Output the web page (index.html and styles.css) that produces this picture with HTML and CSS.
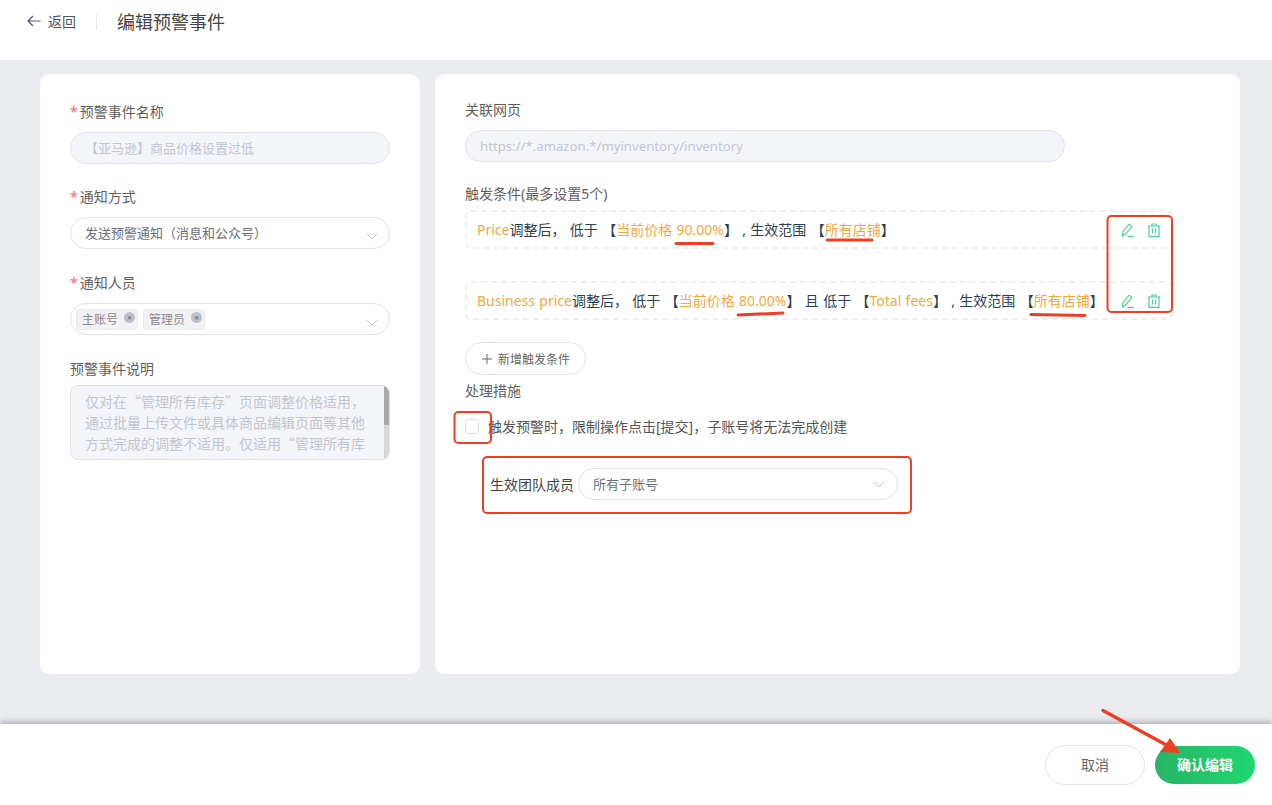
FILE: index.html
```html
<!DOCTYPE html>
<html lang="zh-CN">
<head>
    <meta charset="UTF-8">
    <title>编辑预警事件</title>
    <link rel="stylesheet" href="styles.css">
</head>
<body>
    <!-- top bar -->
    <header class="topbar">
        <a class="back">
            <svg width="14" height="12" viewBox="0 0 14 12" fill="none" stroke="#4a5a68" stroke-width="1.2"><path d="M13.5 6H1M6 1 1 6l5 5"/></svg>
            返回
        </a>
        <span class="divider"></span>
        <h1 class="page-title">编辑预警事件</h1>
    </header>

    <main class="content">
        <!-- left card -->
        <section class="card card-left">
            <div class="field">
                <label class="label"><i>*</i>预警事件名称</label>
                <div class="input disabled">【亚马逊】商品价格设置过低</div>
            </div>
            <div class="field">
                <label class="label"><i>*</i>通知方式</label>
                <div class="input select">发送预警通知（消息和公众号）
                    <svg class="chevron" width="12" height="7" viewBox="0 0 12 7" fill="none" stroke="#c5c8d2" stroke-width="1"><path d="M1 1l5 5 5-5"/></svg>
                </div>
            </div>
            <div class="field">
                <label class="label"><i>*</i>通知人员</label>
                <div class="input select tags">
                    <span class="tag">主账号<b class="tag-x">×</b></span>
                    <span class="tag">管理员<b class="tag-x">×</b></span>
                    <svg class="chevron" width="12" height="7" viewBox="0 0 12 7" fill="none" stroke="#c5c8d2" stroke-width="1"><path d="M1 1l5 5 5-5"/></svg>
                </div>
            </div>
            <div class="field last">
                <label class="label">预警事件说明</label>
                <div class="textarea">
                    仅对在“管理所有库存”页面调整价格适用，<br>
                    通过批量上传文件或具体商品编辑页面等其他<br>
                    方式完成的调整不适用。仅适用“管理所有库
                    <span class="scroll-track"><span class="scroll-thumb"></span></span>
                </div>
            </div>
        </section>

        <!-- right card -->
        <section class="card card-right">
            <label class="label">关联网页</label>
            <div class="input disabled url">https://*.amazon.*/myinventory/inventory</div>

            <label class="label cond-label">触发条件(最多设置5个)</label>
            <div class="cond">
                <p><em>Price</em>调整后， 低于 【<em>当前价格 90.00%</em>】 , 生效范围 【<em>所有店铺</em>】</p>
                <div class="cond-actions">
                    <svg width="14" height="14" viewBox="0 0 14 14" fill="none" stroke="#4bd07f" stroke-width="1.1"><path d="M1.500 13 2 8.500 8 1.200l3 2.200L5 10.500 1.500 13z"/><path d="M6.500 13.500h6.500" stroke-width="1.200"/></svg>
                    <svg width="14" height="14" viewBox="0 0 14 14" fill="none" stroke="#4bd49a" stroke-width="1.2"><path d="M.5 3h13M5 3V1h4v2M2 3v10.300h10V3M5.500 5.500v5M8.500 5.500v5"/></svg>
                </div>
            </div>
            <div class="cond second">
                <p><em>Business price</em>调整后， 低于 【<em>当前价格 80.00%</em>】 且 低于 【<em>Total fees</em>】 , 生效范围 【<em>所有店铺</em>】</p>
                <div class="cond-actions">
                    <svg width="14" height="14" viewBox="0 0 14 14" fill="none" stroke="#4bd07f" stroke-width="1.1"><path d="M1.500 13 2 8.500 8 1.200l3 2.200L5 10.500 1.500 13z"/><path d="M6.500 13.500h6.500" stroke-width="1.200"/></svg>
                    <svg width="14" height="14" viewBox="0 0 14 14" fill="none" stroke="#4bd49a" stroke-width="1.2"><path d="M.5 3h13M5 3V1h4v2M2 3v10.300h10V3M5.500 5.500v5M8.500 5.500v5"/></svg>
                </div>
            </div>

            <button type="button" class="add-btn">
                <svg width="10" height="10" viewBox="0 0 10 10" stroke="#666" stroke-width="1"><path d="M5 0v10M0 5h10"/></svg>
                新增触发条件
            </button>

            <label class="label action-label">处理措施</label>
            <div class="check-row">
                <span class="checkbox"></span>
                <span>触发预警时，限制操作点击[提交]，子账号将无法完成创建</span>
            </div>
            <div class="team-row">
                <span>生效团队成员</span>
                <div class="input select team">所有子账号
                    <svg class="chevron" width="12" height="7" viewBox="0 0 12 7" fill="none" stroke="#c5c8d2" stroke-width="1"><path d="M1 1l5 5 5-5"/></svg>
                </div>
            </div>
        </section>
    </main>

    <!-- bottom bar -->
    <footer class="bottombar">
        <button type="button" class="btn">取消</button>
        <button type="button" class="btn primary">确认编辑</button>
    </footer>

    <!-- red marks drawn over the screenshot -->
    <svg class="marks" width="1272" height="805" viewBox="0 0 1272 805" fill="none" stroke="#ee3f24" stroke-width="2">
        <rect x="1107.500" y="216" width="64.500" height="96" rx="4"/>
        <rect x="454.500" y="412" width="36.500" height="31" rx="4"/>
        <rect x="483" y="457" width="428" height="56" rx="4"/>
        <g stroke-width="3" stroke-linecap="round">
            <path d="M676 243.500h37"/>
            <path d="M827 240h45"/>
            <path d="M738 315l45-2"/>
            <path d="M1031 314.500l54 1"/>
        </g>
        <path d="M1103 710.500 1170 747" stroke-width="3.500" stroke-linecap="round"/>
        <path d="M1170 738l10 15-20-1z" fill="#ee3f24" stroke="none"/>
    </svg>
</body>
</html>
```

FILE: styles.css
```css
*{
    margin: 0;
    padding: 0;
    box-sizing: border-box;
}
body{
    font-family: "Noto Sans", "Noto Sans CJK SC", sans-serif;
    font-size: 14px;
    color: #666;
    height: 805px;
    overflow: hidden;
    position: relative;
    display: flex;
    flex-direction: column;
    background: #fff;
}
.topbar{
    height: 60px;
    flex: none;
    display: flex;
    align-items: flex-start;
    padding: 11px 0 0 27px;
    background: #fff;
}
.back{
    display: flex;
    align-items: center;
    gap: 7px;
    height: 20px;
    color: #4a5560;
}
.divider{
    width: 1px;
    height: 16px;
    margin: 3px 20px 0 20px;
    background: #e6e6e6;
}
.page-title{
    font-size: 18px;
    font-weight: 400;
    line-height: 22px;
    color: #444;
}
.content{
    flex: 1;
    display: flex;
    gap: 15px;
    align-items: flex-start;
    padding: 14px 32px 0 40px;
    background: #ebecf0;
}
.card{
    height: 600px;
    background: #fff;
    border-radius: 10px;
}
.card-left{
    width: 380px;
    padding: 28px 30px;
}
.card-right{
    width: 805px;
    padding: 26px 30px;
}
.field{
    margin-bottom: 23px;
}
.field:nth-child(2){
    margin-bottom: 24px;
}
.field.last{
    margin-top: 24px;
}
.label{
    display: block;
    height: 20px;
    line-height: 20px;
    margin-bottom: 10px;
    color: #5f5f5f;
}
.label i{
    font-style: normal;
    color: #f56c6c;
    margin-right: 2px;
}
.input{
    display: flex;
    align-items: center;
    position: relative;
    height: 32px;
    padding: 0 14px 1px;
    border: 1px solid #e2e3ea;
    border-radius: 16px;
    background: #fff;
    color: #6b6e75;
    font-size: 13px;
}
.disabled{
    background: #f4f5f9;
    color: #c3c5cc;
}
.url{
    width: 600px;
    font-size: 13.2px;
}
.chevron{
    position: absolute;
    right: 11px;
    top: 15px;
}
.tags{
    padding: 0 5px;
    gap: 5px;
}
.tag{
    display: flex;
    align-items: center;
    justify-content: space-between;
    width: 62px;
    height: 21px;
    padding: 0 2px 0 5px;
    border: 1px solid #ebebee;
    border-radius: 3px;
    background: #f2f2f4;
    font-size: 12px;
    color: #8a8a8f;
}
.tag-x{
    width: 11px;
    height: 11px;
    margin-top: -3px;
    border-radius: 50%;
    background: #bfc1ca;
    color: #666;
    font-size: 9px;
    font-weight: 400;
    line-height: 11px;
    text-align: center;
}
.textarea{
    position: relative;
    height: 75px;
    margin-top: -4px;
    padding: 5px 5px 0 14px;
    overflow: hidden;
    border: 1px solid #e2e3ea;
    border-radius: 8px;
    background: #f4f5f9;
    color: #c3c5cc;
    font-family: "Noto Sans CJK SC", sans-serif;
    line-height: 21px;
    white-space: nowrap;
}
.scroll-track{
    position: absolute;
    right: 0;
    top: 0;
    bottom: 0;
    width: 5px;
    background: #d8d8dc;
}
.scroll-thumb{
    display: block;
    width: 5px;
    height: 39px;
    background: #a8a8ad;
}
.cond-label{
    margin: 22px 0 6px;
}
.cond{
    display: flex;
    align-items: center;
    justify-content: space-between;
    width: 708px;
    height: 39px;
    padding: 0 10px 2px 10px;
    border: 2px dashed #eeeef3;
    border-radius: 6px;
    color: #2c3e50;
    font-size: 14px;
    word-spacing: 0.7px;
    white-space: nowrap;
}
.cond.second{
    margin-top: 32px;
}
.cond em{
    font-style: normal;
    color: #f5a742;
}
.cond-actions{
    display: flex;
    gap: 12px;
    padding-top: 2px;
}
.add-btn{
    display: flex;
    align-items: center;
    gap: 6px;
    height: 33px;
    margin-top: 22px;
    padding: 0 15px 0 16px;
    border: 1px solid #e2e3ea;
    border-radius: 17px;
    background: #fff;
    color: #666;
    font-family: inherit;
    font-size: 12px;
}
.action-label{
    margin: 6px 0 0;
}
.check-row{
    display: flex;
    align-items: center;
    gap: 9px;
    height: 20px;
    margin-top: 15px;
    color: #555;
}
.checkbox{
    width: 14px;
    height: 15px;
    border: 1px solid #dcdde6;
    border-radius: 3px;
}
.team-row{
    display: flex;
    align-items: center;
    gap: 4px;
    margin: 32px 0 0 25px;
    color: #444;
}
.team{
    width: 320px;
}
.team .chevron{
    right: 12px;
    top: 12px;
}
.bottombar{
    height: 81px;
    flex: none;
    display: flex;
    justify-content: flex-end;
    align-items: flex-start;
    gap: 10px;
    padding: 21px 17px 0 0;
    background: #fff;
    box-shadow: 0 -2px 6px rgba(90,90,100,0.45);
}
.btn{
    width: 100px;
    height: 40px;
    padding-bottom: 2px;
    border: 1px solid #e2e3ea;
    border-radius: 20px;
    background: #fff;
    color: #666;
    font-family: inherit;
    font-size: 14px;
}
.btn.primary{
    height: 38px;
    margin-top: 1px;
    border: none;
    background: linear-gradient(90deg, #27b565, #1fd770);
    color: #fff;
    font-weight: 700;
}
.marks{
    position: absolute;
    left: 0;
    top: 0;
    pointer-events: none;
}
```
